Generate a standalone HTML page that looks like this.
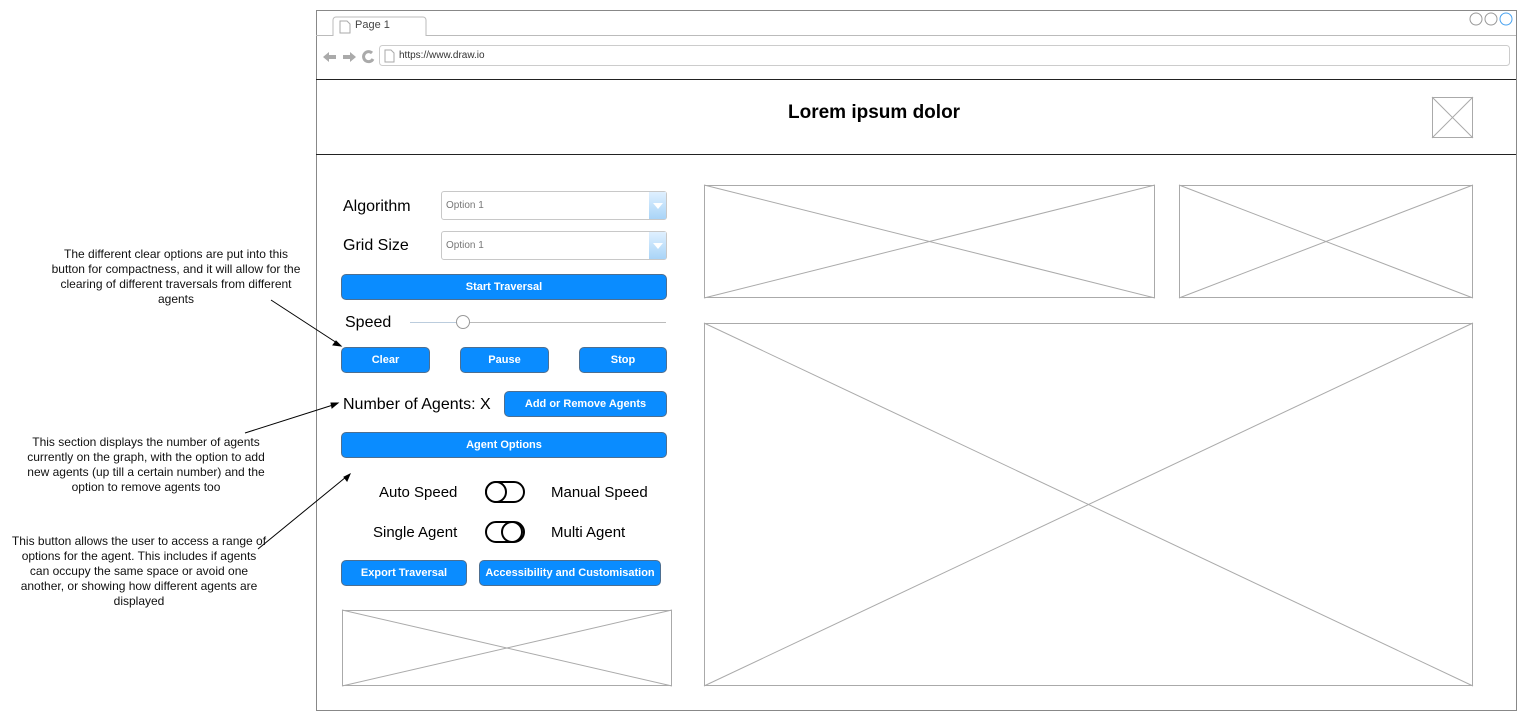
<!DOCTYPE html>
<html><head><meta charset="utf-8"><style>
*{margin:0;padding:0;box-sizing:border-box}
body{width:1523px;height:717px;background:#fff;position:relative;overflow:hidden;font-family:"Liberation Sans",Arial,sans-serif;color:#000}
.a{position:absolute}
.btn{position:absolute;background:#0a8cff;border:1px solid #4d6f91;border-radius:5px;color:#fff;font-weight:bold;font-size:11px;display:flex;align-items:center;justify-content:center}
.lbl{position:absolute;font-size:16px;white-space:nowrap}
.note{position:absolute;font-size:12px;text-align:center;line-height:15px;color:#111;white-space:nowrap}
.sel{position:absolute;border:1px solid #c8c8c8;border-radius:3px;background:#fff;font-size:10px;color:#777;padding:8px 0 0 4px}
.sel i{position:absolute;right:0;top:0;bottom:0;width:17px;background:linear-gradient(#dff0ff,#a9d4f7)}
.sel i:after{content:"";position:absolute;left:4px;top:11px;border-left:5px solid transparent;border-right:5px solid transparent;border-top:6px solid #fff}
.tog{position:absolute;width:40px;height:22px;border:2px solid #000;border-radius:11px}
.tog b{position:absolute;top:-2px;width:22px;height:22px;border:2px solid #000;border-radius:50%;background:#fff}
</style></head><body>
<svg class="a" style="left:0;top:0" width="1523" height="717">
<rect x="316.5" y="10.5" width="1200" height="700" fill="none" stroke="#888"/>
<line x1="316" y1="35.5" x2="1516" y2="35.5" stroke="#bbb"/>
<path d="M333 36V20a3 3 0 0 1 3-3h87a3 3 0 0 1 3 3v16" fill="#fff" stroke="#bbb"/>
<path d="M340 21h7l3 3v9h-10z" fill="#fff" stroke="#aaa"/>
<circle cx="1476" cy="19" r="6" fill="none" stroke="#999"/>
<circle cx="1491" cy="19" r="6" fill="none" stroke="#999"/>
<circle cx="1506" cy="19" r="6" fill="none" stroke="#4aa3f0"/>
<rect x="379.5" y="45.5" width="1130" height="20" rx="3" fill="none" stroke="#ccc"/>
<path d="M385 50h6l3 3v9h-9z" fill="#fff" stroke="#aaa"/>
<path d="M323 57l6-5v3h7v4h-7v3z" fill="#aaa"/><path d="M356 57l-6-5v3h-7v4h7v3z" fill="#aaa"/>
<path d="M372 53a5 5 0 1 0 1 6" fill="none" stroke="#aaa" stroke-width="3"/>
<line x1="316" y1="79.5" x2="1516" y2="79.5" stroke="#222"/>
<line x1="316" y1="154.5" x2="1516" y2="154.5" stroke="#222"/>
<g fill="none" stroke="#aaa" stroke-width="1">
<rect x="1432.5" y="97.5" width="40" height="40"/><path d="M1432 97l41 41M1473 97l-41 41"/>
<rect x="704.5" y="185.5" width="450" height="112"/><path d="M704 185l451 113M1155 185l-451 113"/>
<rect x="1179.5" y="185.5" width="293" height="112"/><path d="M1179 185l294 113M1473 185l-294 113"/>
<rect x="704.5" y="323.5" width="768" height="362"/><path d="M704 323l769 363M1473 323l-769 363"/>
<rect x="342.5" y="610.5" width="329" height="75"/><path d="M342 610l330 76M672 610l-330 76"/>
</g>
<line x1="410" y1="322.5" x2="666" y2="322.5" stroke="#bbb"/>
<line x1="410" y1="322.5" x2="460" y2="322.5" stroke="#bcd"/>
<circle cx="463" cy="322" r="6.5" fill="#fff" stroke="#999"/>
<g stroke="#000" fill="#000">
<line x1="271" y1="300" x2="337" y2="343"/><path d="M341 346l-8-1 3-4z"/>
<line x1="245" y1="433" x2="333" y2="405"/><path d="M338 403l-6 5-1-5z"/>
<line x1="258" y1="549" x2="346" y2="477"/><path d="M350 474l-3 7-3-4z"/>
</g>
</svg>
<div class="a" style="left:355px;top:19px;font-size:11px;color:#444">Page 1</div>
<div class="a" style="left:399px;top:50px;font-size:10px;color:#333">https://www.draw.io</div>
<div class="a" style="left:788px;top:102px;font-size:19px;font-weight:bold">Lorem ipsum dolor</div>
<div class="lbl" style="left:343px;top:198px">Algorithm</div>
<div class="lbl" style="left:343px;top:237px">Grid Size</div>
<div class="sel" style="left:441px;top:191px;width:226px;height:29px">Option 1<i></i></div>
<div class="sel" style="left:441px;top:231px;width:226px;height:29px">Option 1<i></i></div>
<div class="btn" style="left:341px;top:274px;width:326px;height:26px">Start Traversal</div>
<div class="lbl" style="left:345px;top:314px">Speed</div>
<div class="btn" style="left:341px;top:347px;width:89px;height:26px">Clear</div>
<div class="btn" style="left:460px;top:347px;width:89px;height:26px">Pause</div>
<div class="btn" style="left:579px;top:347px;width:88px;height:26px">Stop</div>
<div class="lbl" style="left:343px;top:396px">Number of Agents: X</div>
<div class="btn" style="left:504px;top:391px;width:163px;height:26px">Add or Remove Agents</div>
<div class="btn" style="left:341px;top:432px;width:326px;height:26px">Agent Options</div>
<div class="lbl" style="left:379px;top:484px;font-size:15px">Auto Speed</div>
<div class="lbl" style="left:551px;top:484px;font-size:15px">Manual Speed</div>
<div class="lbl" style="left:373px;top:524px;font-size:15px">Single Agent</div>
<div class="lbl" style="left:551px;top:524px;font-size:15px">Multi Agent</div>
<div class="tog" style="left:485px;top:481px"><b style="left:-2px"></b></div>
<div class="tog" style="left:485px;top:521px"><b style="left:14px"></b></div>
<div class="btn" style="left:341px;top:560px;width:126px;height:26px">Export Traversal</div>
<div class="btn" style="left:479px;top:560px;width:182px;height:26px">Accessibility and Customisation</div>
<div class="note" style="left:26px;top:247px;width:300px">The different clear options are put into this<br>button for compactness, and it will allow for the<br>clearing of different traversals from different<br>agents</div>
<div class="note" style="left:0px;top:435px;width:292px">This section displays the number of agents<br>currently on the graph, with the option to add<br>new agents (up till a certain number) and the<br>option to remove agents too</div>
<div class="note" style="left:0px;top:534px;width:278px">This button allows the user to access a range of<br>options for the agent. This includes if agents<br>can occupy the same space or avoid one<br>another, or showing how different agents are<br>displayed</div>
</body></html>
